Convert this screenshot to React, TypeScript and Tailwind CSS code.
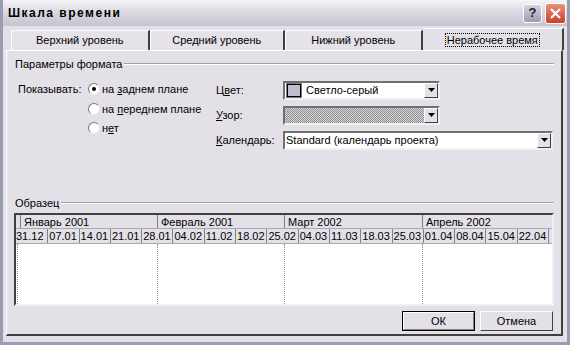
import React from "react";

const F = { fontFamily: '"Liberation Sans", "DejaVu Sans", sans-serif' };

function U({ c }: { c: string }) {
  return <span className="underline underline-offset-1">{c}</span>;
}

function Radio({ on, children }: { on?: boolean; children: React.ReactNode }) {
  return (
    <div className="flex items-center gap-[2px] h-[19.5px]">
      <span className="relative w-[12px] h-[12px] rounded-full bg-white border border-[#7a7a7a] border-b-[#e8e8e8] border-r-[#e8e8e8] flex items-center justify-center">
        {on && <span className="w-[4px] h-[4px] rounded-full bg-black" />}
      </span>
      <span>{children}</span>
    </div>
  );
}

function Arrow() {
  return (
    <div className="w-[14px] h-full bg-[#e4e0e8] border border-t-white border-l-white border-r-[#404040] border-b-[#404040] flex items-center justify-center">
      <svg width="7" height="4" viewBox="0 0 7 4"><path d="M0 0h7L3.5 4z" fill="#000" /></svg>
    </div>
  );
}

const dates = [
  "31.12", "07.01", "14.01", "21.01", "28.01", "04.02", "11.02", "18.02", "25.02",
  "04.03", "11.03", "18.03", "25.03", "01.04", "08.04", "15.04", "22.04", "",
];

export default function App() {
  return (
    <div style={F} className="w-[570px] h-[345px] overflow-hidden bg-[#e4e0e8] text-[11px] text-black flex flex-col border-l-[3px] border-r-[3px] border-b-[3px] border-l-[#9c9cb0] border-r-[#9c9cb0] border-b-[#9c9cb0]">
      {/* title bar */}
      <div className="h-[26px] shrink-0 flex items-center justify-between pl-[5px] pr-[1px] bg-[linear-gradient(#f6f6f8,#dcdce4_40%,#c4c4d0)]">
        <span className="font-bold text-[12px] tracking-[1.5px]">Шкала времени</span>
        <div className="flex items-center gap-[3px]">
          <div className="w-[19px] h-[19px] rounded-[3px] border border-white bg-[linear-gradient(#d4d4e0,#9c9cb4)] flex items-center justify-center text-[#222] font-bold text-[13px]">?</div>
          <div className="w-[21px] h-[21px] rounded-[3px] border border-white bg-[linear-gradient(#e8907c,#c8402c)] flex items-center justify-center">
            <svg width="11" height="11" viewBox="0 0 11 11"><path d="M1 1L10 10M10 1L1 10" stroke="#fff" strokeWidth="2.2" /></svg>
          </div>
        </div>
      </div>

      {/* tabs */}
      <div className="flex flex-col px-[3px] pt-[2px] flex-1">
        <div className="flex h-[22px] pl-[5px] items-end">
          {["Верхний уровень", "Средний уровень", "Нижний уровень"].map((t, i) => (
            <div key={t} className={`h-[20px] ${i === 0 ? "w-[139px]" : i === 1 ? "w-[136px]" : "w-[138px]"} bg-[#e6e2ea] border-t border-l border-t-white border-l-white border-r-2 border-r-[#404040] rounded-tl-[3px] flex items-center justify-center`}>
              {t}
            </div>
          ))}
          <div className="h-[22px] w-[142px] bg-[#e4e0e8] border-t border-t-white border-r-2 border-r-[#404040] flex items-center justify-center">
            <span className="border border-dotted border-black px-[1px] leading-[12px]">Нерабочее время</span>
          </div>
        </div>
        <div className="flex-1 mb-[6px] mr-[1px] border border-t-white border-l-white border-r-2 border-b-2 border-r-[#404040] border-b-[#404040] flex flex-col px-[7px]">
          {/* group 1 */}
          <div className="flex items-center gap-[2px] mt-[5px]">
            <span className="pl-[1px]">Параметры формата</span>
            <div className="flex-1 h-[2px] border-t border-t-[#a0a0a8] border-b border-b-white" />
          </div>
          <div className="flex mt-[7px]">
            <div className="w-[74px] pl-[4px] h-[20px] flex items-center">Показывать:</div>
            <div className="w-[128px] flex flex-col">
              <Radio on>на <U c="з" />аднем плане</Radio>
              <Radio>на <U c="п" />ереднем плане</Radio>
              <Radio>н<U c="е" />т</Radio>
            </div>
            <div className="flex flex-col gap-[6px] pt-[1px]">
              <div className="flex items-center h-[19px]">
                <span className="w-[67px]">Ц<U c="в" />ет:</span>
                <div className="w-[157px] h-[19px] bg-white border-2 border-t-[#707070] border-l-[#707070] border-r-[#f0f0f0] border-b-[#f0f0f0] flex items-center">
                  <span className="ml-[2px] w-[14px] h-[13px] border border-black bg-[#c0bccc] outline-1 outline-[#7a7a7a]" />
                  <span className="ml-[5px] flex-1">Светло-серый</span>
                  <Arrow />
                </div>
              </div>
              <div className="flex items-center h-[19px]">
                <span className="w-[67px]"><U c="У" />зор:</span>
                <div className="w-[157px] h-[19px] bg-white border-2 border-t-[#707070] border-l-[#707070] border-r-[#f0f0f0] border-b-[#f0f0f0] flex items-center">
                  <span className="flex-1 h-full bg-[repeating-conic-gradient(#8c8c8c_0%_25%,#dadada_0%_50%)] bg-size-[2px_2px]" />
                  <Arrow />
                </div>
              </div>
              <div className="flex items-center h-[19px]">
                <span className="w-[67px]"><U c="К" />алендарь:</span>
                <div className="w-[270px] h-[19px] bg-white border-2 border-t-[#707070] border-l-[#707070] border-r-[#f0f0f0] border-b-[#f0f0f0] flex items-center">
                  <span className="ml-[1px] flex-1">Standard (календарь проекта)</span>
                  <Arrow />
                </div>
              </div>
            </div>
          </div>

          {/* group 2 */}
          <div className="flex items-center gap-[2px] mt-[45px]">
            <span className="pl-[1px]">Образец</span>
            <div className="flex-1 h-[2px] border-t border-t-[#a0a0a8] border-b border-b-white" />
          </div>
          <div className="mt-[2px] h-[93px] border-2 border-t-[#404040] border-l-[#404040] border-r-[#f0f0f0] border-b-[#f0f0f0] bg-white flex flex-col overflow-hidden">
            <div className="flex h-[14px] bg-[#e4e0e8] border-b border-b-[#a8a8b0] shrink-0">
              <div className="w-[4px] shrink-0" />
              {[["Январь 2001", 137], ["Февраль 2001", 127], ["Март 2002", 138], ["Апрель 2002", 140]].map(([t, w]) => (
                <div key={t as string} style={{ width: w as number }} className="shrink-0 border-l border-l-[#808088] pl-[3px] leading-[14px]">{t}</div>
              ))}
            </div>
            <div className="flex h-[15px] bg-[#e4e0e8] border-b border-b-[#a8a8b0] shrink-0">
              {dates.map((d, i) => (
                <div key={i} className={`w-[31.3px] shrink-0 leading-[15px] ${i === 0 ? "" : "border-l border-l-[#808088] pl-[1px]"}`}>{d}</div>
              ))}
            </div>
            <div className="flex-1 flex">
              <div className="w-[1px] shrink-0" />
              {[140, 127, 138, 140].map((w, i) => (
                <div key={i} style={{ width: w }} className="shrink-0 border-l border-dotted border-l-[#9090a0]" />
              ))}
            </div>
          </div>

          <div className="flex justify-end gap-[5px] mt-[5px] pr-[1px]">
            <div className="w-[73px] h-[20px] border border-black flex">
              <div className="flex-1 border border-t-white border-l-white border-r-[#808080] border-b-[#808080] flex items-center justify-center">ОК</div>
            </div>
            <div className="w-[73px] h-[20px] border border-t-white border-l-white border-r-[#404040] border-b-[#404040] flex items-center justify-center">Отмена</div>
          </div>
        </div>
      </div>
    </div>
  );
}
